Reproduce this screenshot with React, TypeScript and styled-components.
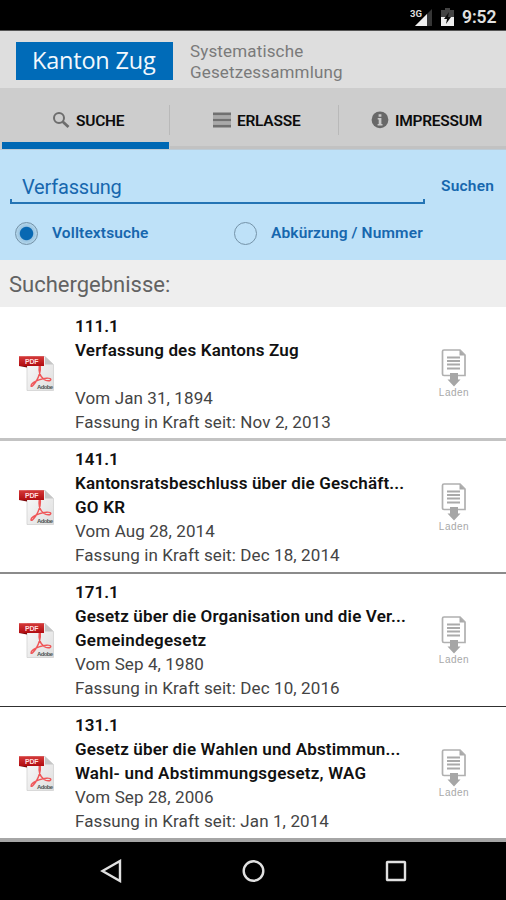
import React from "react";
import styled, { createGlobalStyle } from "styled-components";

const Global = createGlobalStyle`
  * { box-sizing: border-box; }
  body { margin: 0; background: #fff; font-family: Roboto, "Liberation Sans", sans-serif; }
`;

const Screen = styled.div`
  width: 506px;
  height: 900px;
  display: flex;
  flex-direction: column;
  overflow: hidden;
  background: #fff;
`;

const StatusBar = styled.div`
  height: 31px;
  flex: none;
  background: #000;
  border-bottom: 1px solid #555;
  display: flex;
  justify-content: flex-end;
  align-items: center;
  padding: 3px 9px 0 0;
`;

const Clock = styled.span`
  color: #e0e0e0;
  font-size: 17.5px;
  font-weight: 600;
  line-height: 20px;
  width: 35px;
  white-space: nowrap;
  letter-spacing: -0.1px;
`;

const SignalIcon = styled.svg`
  width: 22px;
  height: 20px;
  margin-right: 9px;
`;

const BatteryIcon = styled.svg`
  width: 13px;
  height: 20px;
  margin-right: 8px;
`;

const Header = styled.header`
  height: 57px;
  flex: none;
  background: #dedede;
  display: flex;
  padding: 11px 0 0 16px;
`;

const Logo = styled.div`
  width: 157px;
  height: 38px;
  background: #006bb8;
  color: #f2f8fd;
  font-family: "Open Sans", Roboto, sans-serif;
  font-size: 23.5px;
  font-weight: 500;
  line-height: 37px;
  padding-left: 16px;
  white-space: nowrap;
  letter-spacing: -0.2px;
`;

const Tagline = styled.div`
  margin: -1px 0 0 17px;
  color: #7a7a7a;
  font-size: 17px;
  line-height: 21px;
  letter-spacing: 0.15px;
`;

const Tabs = styled.nav`
  height: 62px;
  flex: none;
  background: #cdcdcd;
  display: grid;
  grid-template-columns: 170px 169px 167px;
  border-bottom: 1px solid #bccbd6;
`;

const Tab = styled.div<{ $active?: boolean; $inset: number }>`
  display: flex;
  align-items: center;
  padding: 3px 0 0 ${(p) => p.$inset}px;
  font-size: 15.5px;
  color: #0c0c0c;
  background:
    linear-gradient(#b9b9b9, #b9b9b9) 100% 17px / 1px 30px no-repeat,
    linear-gradient(${(p) => (p.$active ? "#0068b4, #0068b4" : "#c2c2c2, #c2c2c2")})
      ${(p) => (p.$active ? "2px 100% / 167px 7px" : "0 100% / 100% 3px")} no-repeat;
  &:last-child {
    background: linear-gradient(#c2c2c2, #c2c2c2) 0 100% / 100% 3px no-repeat;
  }
`;

const TabIcon = styled.svg`
  width: 18px;
  height: 18px;
  flex: none;
  margin-right: 6px;
`;

const TabLabel = styled.span`
  position: relative;
  letter-spacing: -0.25px;
  font-weight: 600;
  line-height: 18px;
  padding-top: 2px;
  white-space: nowrap;
`;

const SearchPanel = styled.section`
  height: 110px;
  flex: none;
  background: #bee1f8;
  color: #1767ae;
`;

const SearchRow = styled.div`
  display: flex;
  height: 56px;
`;

const Field = styled.div`
  width: 415px;
  height: 29px;
  margin: 25px 0 0 10px;
  padding-left: 12px;
  font-size: 20px;
  line-height: 24px;
  letter-spacing: -0.2px;
  background:
    linear-gradient(#2474b5, #2474b5) 0 100% / 100% 2px no-repeat,
    linear-gradient(#2474b5, #2474b5) 0 100% / 2px 5px no-repeat,
    linear-gradient(#2474b5, #2474b5) 100% 100% / 2px 5px no-repeat;
`;

const SearchButton = styled.span`
  margin: 25px 0 0 16px;
  font-size: 15.5px;
  font-weight: 600;
  line-height: 22px;
  letter-spacing: 0.2px;
`;

const Options = styled.div`
  display: grid;
  grid-template-columns: 219px 1fr;
  height: 54px;
  padding-left: 15px;
`;

const Option = styled.div`
  display: flex;
  align-items: center;
  height: 54px;
  gap: 14px;
  font-size: 15.5px;
  font-weight: 600;
  letter-spacing: 0.13px;
`;

const Radio = styled.span<{ $on?: boolean }>`
  width: 23px;
  height: 23px;
  border-radius: 50%;
  border: 1px solid #7593a8;
  background: ${(p) => (p.$on ? "radial-gradient(circle, #0868b2 0 6.2px, #9cc5e1 7.2px, #b0d3e9 10px)" : "transparent")};
`;

const ResultsHeading = styled.h2`
  height: 47px;
  flex: none;
  margin: 0;
  padding-left: 9px;
  background: #eeeeee;
  color: #626262;
  font-size: 22px;
  font-weight: 400;
  line-height: 49px;
`;

const Results = styled.main`
  height: 535px;
  flex: none;
`;

const PdfIcon = styled.svg`
  width: 36px;
  height: 37px;
  margin: 48px 0 0 19px;
`;

const Details = styled.div`
  padding-top: 6px;
  font-size: 17px;
  line-height: 24px;
  white-space: nowrap;
`;

const ResultRow = styled.article<{ $height: number; $line: number; $lineColor: string }>`
  height: ${(p) => p.$height}px;
  border-bottom: ${(p) => p.$line}px solid ${(p) => p.$lineColor};
  display: grid;
  grid-template-columns: 75px 350px 58px;
  &:first-child ${Details} {
    padding-top: 7px;
  }
`;

const Strong = styled.div<{ $spacing?: number }>`
  height: 24px;
  font-weight: 600;
  color: #111;
  letter-spacing: ${(p) => p.$spacing ?? 0}px;
`;

const Meta = styled.div`
  height: 24px;
  color: #444;
  letter-spacing: 0.1px;
`;

const Download = styled.div`
  display: flex;
  flex-direction: column;
  align-items: center;
  padding-top: 41px;
  color: #a8a8a8;
  font-size: 10px;
  line-height: 9px;
  font-family: "Liberation Sans", sans-serif;
  letter-spacing: 0.5px;
`;

const DownloadIcon = styled.svg`
  width: 26px;
  height: 40px;
`;

const NavBar = styled.footer`
  height: 58px;
  flex: none;
  background: #000;
  display: flex;
  align-items: center;
  padding-left: 99px;
  gap: 118px;
`;

const NavIcon = styled.svg`
  width: 24px;
  height: 24px;
  fill: none;
  stroke: #e0e0e0;
  stroke-width: 2.4;
`;

interface Result {
  no: string;
  title: string;
  short: string;
  date: string;
  since: string;
  height: number;
  line: number;
  lineColor: string;
}

const results: Result[] = [
  { no: "111.1", title: "Verfassung des Kantons Zug", short: "", date: "Jan 31, 1894", since: "Nov 2, 2013", height: 134, line: 3, lineColor: "#c3c3c3" },
  { no: "141.1", title: "Kantonsratsbeschluss über die Geschäft...", short: "GO KR", date: "Aug 28, 2014", since: "Dec 18, 2014", height: 133, line: 2, lineColor: "#8b8b8b" },
  { no: "171.1", title: "Gesetz über die Organisation und die Ver...", short: "Gemeindegesetz", date: "Sep 4, 1980", since: "Dec 10, 2016", height: 133, line: 1, lineColor: "#303030" },
  { no: "131.1", title: "Gesetz über die Wahlen und Abstimmun...", short: "Wahl- und Abstimmungsgesetz, WAG", date: "Sep 28, 2006", since: "Jan 1, 2014", height: 135, line: 4, lineColor: "#a6a6a6" },
];

const Pdf = () => (
  <PdfIcon viewBox="0 0 36 37">
    <defs>
      <linearGradient id="page" x1="0" y1="0" x2="1" y2="1">
        <stop offset="0" stopColor="#fafafa" />
        <stop offset="1" stopColor="#dedede" />
      </linearGradient>
      <linearGradient id="band" x1="0" y1="0" x2="0" y2="1">
        <stop offset="0" stopColor="#d63a3a" />
        <stop offset="1" stopColor="#b00c10" />
      </linearGradient>
    </defs>
    <path d="M8 1.500H26L34.500 9.500V35.500H8Z" fill="url(#page)" stroke="#d2d2d2" strokeWidth="0.800" />
    <path d="M26 1.500V9.500H34.500Z" fill="#c6c6c6" />
    <path d="M20.300 11C19.500 16 21 21.500 25 24.500C28 26.500 32 26 31.800 24.300C31.500 22.500 25 23 20 24.800C16 26.200 11.500 29 12 31C12.500 32.500 15 29.500 17 26.500C19.500 22.500 21.800 16 21.300 11" fill="none" stroke="#ef5658" strokeWidth="1.400" />
    <path d="M0 1.200H25V11H0Z" fill="url(#band)" />
    <path d="M0 11h8v1.500Z" fill="#7c090b" />
    <text x="6" y="8.800" fontSize="7" fontWeight="700" fill="#ffdede" textLength="13.500" fontFamily="Liberation Sans, sans-serif">PDF</text>
    <text x="18" y="34" fontSize="6" fontWeight="700" fill="#4c5755" textLength="16" fontFamily="Liberation Sans, sans-serif">Adobe</text>
  </PdfIcon>
);

export default function App() {
  return (
    <>
      <Global />
      <Screen>
        <StatusBar>
          <SignalIcon viewBox="0 0 22 20">
            <path d="M22 2V19H5Z" fill="#363636" />
            <path d="M17 7V19H5Z" fill="#eee" />
            <text x="0" y="10" fontSize="9.500" fontWeight="700" fill="#ddd" textLength="12" lengthAdjust="spacingAndGlyphs">3G</text>
          </SignalIcon>
          <BatteryIcon viewBox="0 0 13 20">
            <path d="M0 3H4V1H9V3H13V19H0Z" fill="#444" />
            <path d="M0 10H13V19H0Z" fill="#eee" />
            <path d="M8 5L3 12H6L5 17L10 10H7Z" fill="#0c0c0c" />
          </BatteryIcon>
          <Clock>9:52</Clock>
        </StatusBar>
        <Header>
          <Logo>Kanton Zug</Logo>
          <Tagline>Systematische<br />Gesetzessammlung</Tagline>
        </Header>
        <Tabs>
          <Tab $active $inset={52}>
            <TabIcon viewBox="0 0 18 18" fill="none" stroke="#6d6d6d">
              <circle cx="7" cy="7" r="5" strokeWidth="2" />
              <path d="M10.800 10.800L16.500 16" strokeWidth="2.800" />
            </TabIcon>
            <TabLabel>SUCHE</TabLabel>
          </Tab>
          <Tab $inset={43}>
            <TabIcon viewBox="0 0 18 18">
              <path d="M0 1.500H18V4.500H0ZM0 7.500H18V10.500H0ZM0 13.500H18V16.500H0Z" fill="#707070" />
              <path d="M0 4.500H18V7.500H0ZM0 10.500H18V13.500H0Z" fill="#a9a9a9" />
            </TabIcon>
            <TabLabel>ERLASSE</TabLabel>
          </Tab>
          <Tab $inset={32}>
            <TabIcon viewBox="0 0 18 18">
              <circle cx="9" cy="8.800" r="8.400" fill="#686868" />
              <path d="M7.600 3.200H10.400V5.700H7.600ZM6.700 7H10.400V13H11.500V14.500H6.600V13H7.700V8.400H6.700Z" fill="#c9c9c9" />
            </TabIcon>
            <TabLabel>IMPRESSUM</TabLabel>
          </Tab>
        </Tabs>
        <SearchPanel>
          <SearchRow>
            <Field>Verfassung</Field>
            <SearchButton>Suchen</SearchButton>
          </SearchRow>
          <Options>
            <Option><Radio $on />Volltextsuche</Option>
            <Option><Radio />Abkürzung / Nummer</Option>
          </Options>
        </SearchPanel>
        <ResultsHeading>Suchergebnisse:</ResultsHeading>
        <Results>
          {results.map((r) => (
            <ResultRow key={r.no} $height={r.height} $line={r.line} $lineColor={r.lineColor}>
              <Pdf />
              <Details>
                <Strong>{r.no}</Strong>
                <Strong $spacing={0.16}>{r.title}</Strong>
                <Strong $spacing={0.22}>{r.short}</Strong>
                <Meta>Vom {r.date}</Meta>
                <Meta>Fassung in Kraft seit: {r.since}</Meta>
              </Details>
              <Download>
                <DownloadIcon viewBox="0 0 26 40">
                  <path d="M3 2H19L24 7V27.500H3Q1.500 27.500 1.500 26V3.500Q1.500 2 3 2Z" fill="#fff" stroke="#b0b0b0" strokeWidth="1.700" />
                  <path d="M18.500 2V7.500H24Z" fill="#a9a9a9" />
                  <path d="M6 9.500H19M6 13H19M6 16.500H19M6 20.500H19" stroke="#aaa" strokeWidth="1.900" />
                  <path d="M9 25H17V31.500H19.500L13 38.500L6.500 31.500H9Z" fill="#a6a6a6" />
                </DownloadIcon>
                Laden
              </Download>
            </ResultRow>
          ))}
        </Results>
        <NavBar>
          <NavIcon viewBox="0 0 24 24"><path d="M21 2V22L3.500 12Z" /></NavIcon>
          <NavIcon viewBox="0 0 24 24"><circle cx="12.500" cy="12" r="9.800" /></NavIcon>
          <NavIcon viewBox="0 0 24 24"><rect x="4" y="3" width="18" height="18" rx="0.500" /></NavIcon>
        </NavBar>
      </Screen>
    </>
  );
}
